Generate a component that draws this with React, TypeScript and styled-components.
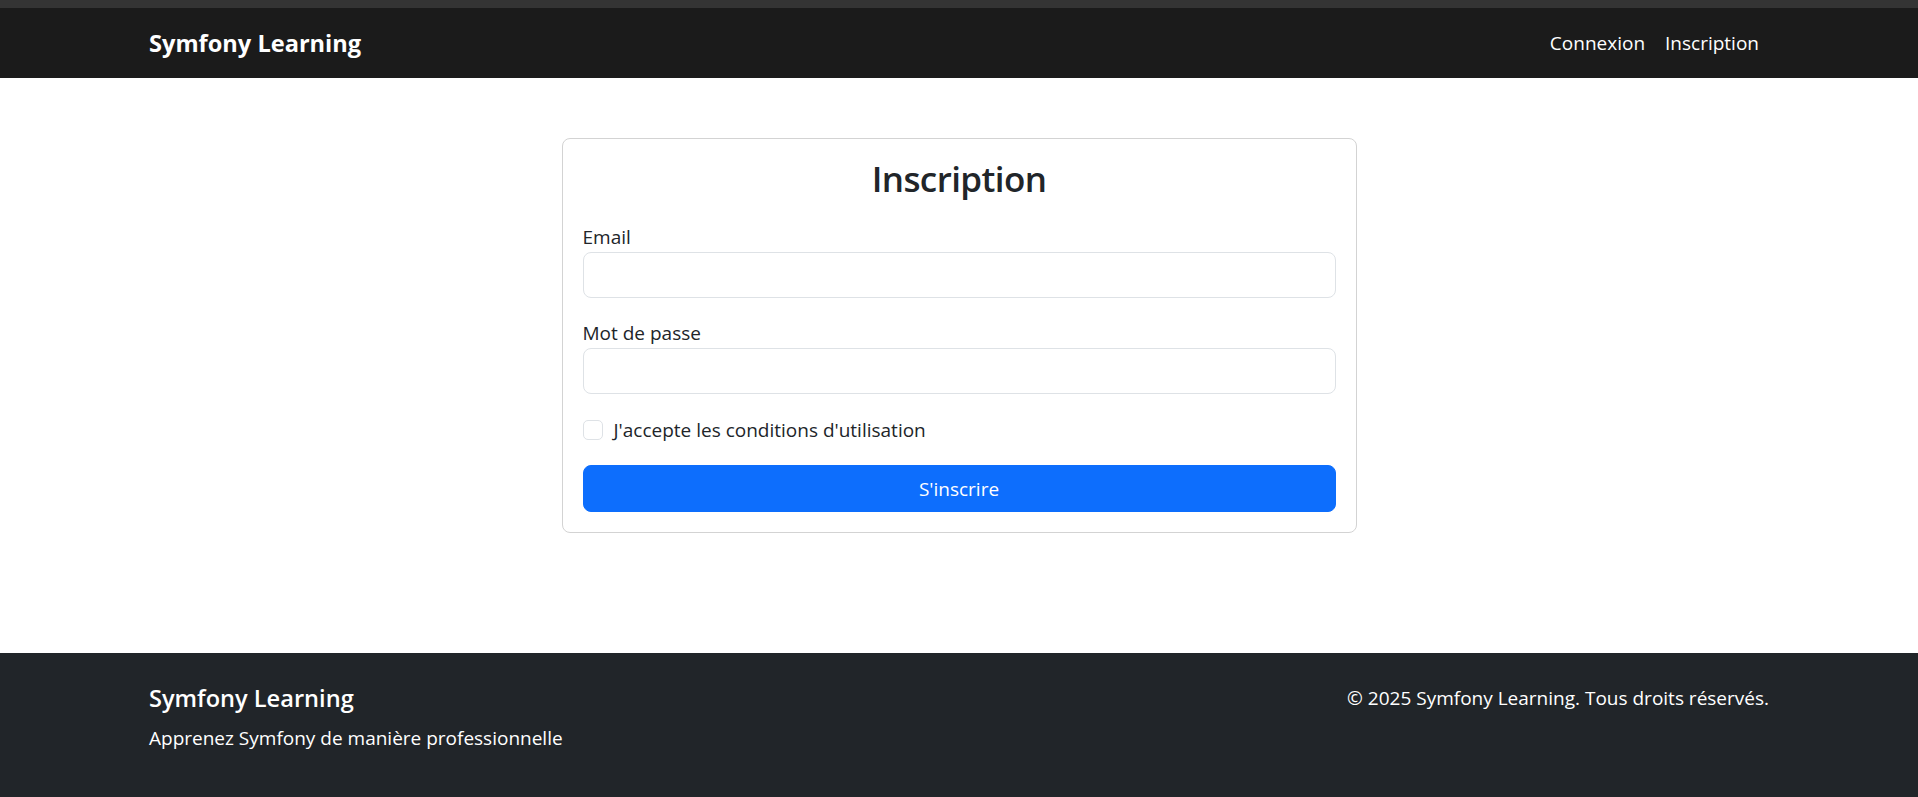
import React from "react";
import styled, { createGlobalStyle } from "styled-components";

const GlobalStyle = createGlobalStyle`
  *, *::before, *::after { box-sizing: border-box; }
  html, body { margin: 0; padding: 0; background: #ffffff; }
  body {
    font-family: "Open Sans", "Noto Sans", Arial, sans-serif;
    font-size: 19px;
    line-height: 30px;
    color: #212529;
  }
`;

const TopStrip = styled.div`
  height: 8px;
  background: #343434;
`;

const Navbar = styled.nav`
  height: 70px;
  background: #1b1b1b;
  display: flex;
  align-items: center;
`;

const Container = styled.div`
  width: 1620px;
  margin: 0 auto;
  display: flex;
  align-items: center;
  justify-content: space-between;
`;

const Brand = styled.a`
  font-size: 23.6px;
  font-weight: 700;
  color: #ffffff;
  text-decoration: none;
  line-height: 36px;
`;

const NavLinks = styled.ul`
  display: flex;
  list-style: none;
  margin: 0;
  padding: 0;
`;

const NavLink = styled.a`
  display: block;
  padding: 10px 10px;
  color: #ffffff;
  text-decoration: none;
  font-size: 19px;
  line-height: 30px;
`;

const Main = styled.main`
  padding: 60px 0 60px;
`;

const Card = styled.div`
  width: 795px;
  margin: 0 auto;
  border: 1px solid #d3d3d3;
  border-radius: 8px;
  padding: 20px;
  background: #ffffff;
`;

const Title = styled.h2`
  margin: 0 0 23px;
  text-align: center;
  font-size: 35px;
  font-weight: 600;
  letter-spacing: -0.6px;
  line-height: 40px;
  color: #212529;
`;

const Field = styled.div<{ $mb?: number }>`
  margin-bottom: ${(p) => p.$mb ?? 20}px;
`;

const Label = styled.label`
  display: inline-block;
  font-size: 19px;
  line-height: 30px;
`;

const Input = styled.input`
  display: block;
  width: 100%;
  height: 46px;
  border: 1px solid #dee2e6;
  border-radius: 8px;
  padding: 7px 15px;
  font: inherit;
  color: #212529;
  background: #ffffff;
  outline: none;
`;

const CheckRow = styled.div`
  display: flex;
  align-items: flex-start;
  min-height: 30px;
  margin-bottom: 20px;
  gap: 11px;
`;

const Checkbox = styled.span`
  flex: 0 0 auto;
  width: 20px;
  height: 20px;
  margin-top: 6px;
  border: 1px solid #dee2e6;
  border-radius: 5px;
  background: #ffffff;
`;

const CheckLabel = styled.label`
  font-size: 19px;
  line-height: 30px;
  padding-top: 1px;
`;

const Button = styled.button`
  display: block;
  width: 100%;
  height: 47px;
  border: 1px solid #0d6efd;
  border-radius: 8px;
  background: #0d6efd;
  color: #ffffff;
  font: inherit;
  font-size: 19px;
  line-height: 30px;
  cursor: pointer;
`;

const Footer = styled.footer`
  margin-top: 60px;
  background: #212529;
  color: #ffffff;
  padding: 30px 0 40px;
`;

const FooterRow = styled.div`
  width: 1620px;
  margin: 0 auto;
  display: grid;
  grid-template-columns: 1fr 1fr;
  align-items: start;
`;

const FooterCol = styled.div<{ $end?: boolean }>`
  text-align: ${(p) => (p.$end ? "right" : "left")};
`;

const FooterTitle = styled.h5`
  margin: 0 0 10px;
  font-size: 23.6px;
  font-weight: 600;
  line-height: 30px;
`;

const FooterText = styled.p<{ $mb?: number }>`
  margin: 0 0 ${(p) => p.$mb ?? 0}px;
  font-size: 19px;
  line-height: 30px;
`;

export default function App() {
  return (
    <>
      <GlobalStyle />
      <TopStrip />
      <Navbar>
        <Container>
          <Brand href="#">Symfony Learning</Brand>
          <NavLinks>
            <li>
              <NavLink href="#">Connexion</NavLink>
            </li>
            <li>
              <NavLink href="#">Inscription</NavLink>
            </li>
          </NavLinks>
        </Container>
      </Navbar>
      <Main>
        <Card>
          <Title>Inscription</Title>
          <Field>
            <Label htmlFor="email">Email</Label>
            <Input id="email" type="email" />
          </Field>
          <Field>
            <Label htmlFor="password">Mot de passe</Label>
            <Input id="password" type="password" />
          </Field>
          <CheckRow>
            <Checkbox />
            <CheckLabel>J'accepte les conditions d'utilisation</CheckLabel>
          </CheckRow>
          <Button type="button">S'inscrire</Button>
        </Card>
      </Main>
      <Footer>
        <FooterRow>
          <FooterCol>
            <FooterTitle>Symfony Learning</FooterTitle>
            <FooterText $mb={20}>Apprenez Symfony de manière professionnelle</FooterText>
          </FooterCol>
          <FooterCol $end>
            <FooterText>© 2025 Symfony Learning. Tous droits réservés.</FooterText>
          </FooterCol>
        </FooterRow>
      </Footer>
    </>
  );
}
